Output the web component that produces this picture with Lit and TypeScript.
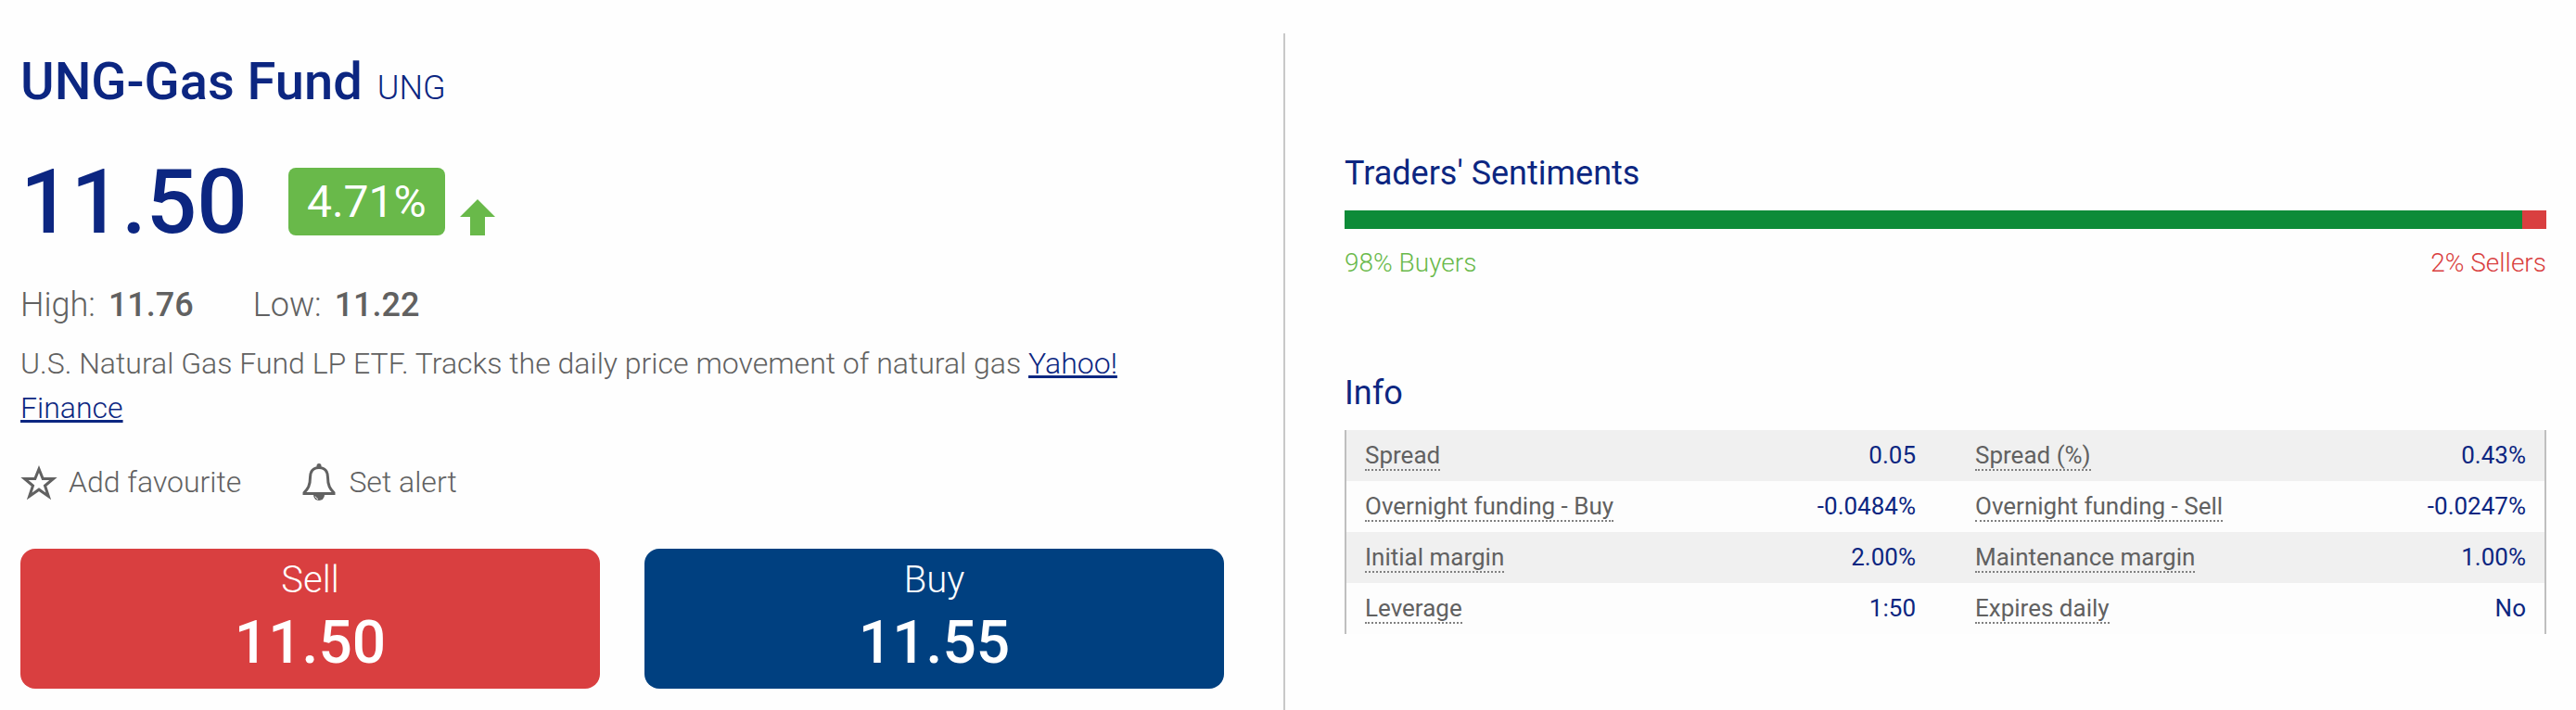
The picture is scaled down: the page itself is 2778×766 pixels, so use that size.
import { LitElement, html, css } from "lit";
import { customElement } from "lit/decorators.js";

const rows = [
  ["Spread", "0.05", "Spread (%)", "0.43%"],
  ["Overnight funding - Buy", "-0.0484%", "Overnight funding - Sell", "-0.0247%"],
  ["Initial margin", "2.00%", "Maintenance margin", "1.00%"],
  ["Leverage", "1:50", "Expires daily", "No"],
];

@customElement("instrument-summary")
class InstrumentSummary extends LitElement {
  static styles = css`
    :host { display: block; color: #616161; font-weight: 300; }
    .title { display: flex; align-items: baseline; gap: 16px; margin: 0; color: #0c2681; font-size: 56px; line-height: 64px; font-weight: 500; }
    .symbol { font-size: 36px; line-height: 44px; font-weight: 300; }
    .quote { display: flex; align-items: flex-end; margin-top: 50px; }
    .price { color: #0c2681; font-size: 96px; line-height: 96px; font-weight: 500; }
    .change { margin: 0 16px 12px 44px; padding: 0 20px; border-radius: 8px; background: #69b94a; color: #fff; font-size: 48px; line-height: 73px; font-weight: 400; }
    .arrow { display: block; margin-bottom: 12px; fill: #69b94a; }
    .range { display: flex; gap: 64px; margin: 41px 0 0; font-size: 36px; line-height: 44px; }
    .range div { display: flex; gap: 14px; }
    .range dd { margin: 0; font-weight: 500; }
    .about { margin: 17px 0 0; font-size: 32px; line-height: 48px; }
    .about a { color: #0c2681; text-underline-offset: 2px; text-decoration-thickness: 3px; }
    .actions { display: flex; gap: 64px; margin-top: 36px; }
    .action { display: flex; align-items: center; gap: 12px; padding: 0; border: 0; background: none; font: inherit; font-size: 32px; line-height: 40px; color: inherit; }
    .icon { display: block; fill: none; stroke: currentColor; stroke-width: 3; }
    .solid { fill: currentColor; stroke: none; }
    .glint { stroke: #fefefe; stroke-width: 1; }
    .deals { display: grid; grid-template-columns: 1fr 1fr; gap: 48px; margin-top: 52px; }
    .deal { display: flex; flex-direction: column; align-items: center; gap: 6px; padding: 12px 0 9px; border: 0; border-radius: 16px; color: #fff; font: inherit; font-size: 40px; line-height: 44px; }
    .deal strong { font-size: 64px; line-height: 80px; font-weight: 500; }
    .sell { background: #d93f40; }
    .buy { background: #004080; }
  `;
  render() {
    return html`
      <h1 class="title">UNG-Gas Fund <span class="symbol">UNG</span></h1>
      <div class="quote">
        <span class="price">11.50</span>
        <span class="change">4.71%</span>
        <svg class="arrow" width="38" height="39" viewBox="0 0 38 39" aria-hidden="true"><path d="M19 0 38 19H27V39H11V19H0Z"/></svg>
      </div>
      <dl class="range">
        <div><dt>High:</dt><dd>11.76</dd></div>
        <div><dt>Low:</dt><dd>11.22</dd></div>
      </dl>
      <p class="about">U.S. Natural Gas Fund LP ETF. Tracks the daily price movement of natural gas <a href="#">Yahoo! Finance</a></p>
      <div class="actions">
        <button class="action" type="button">
          <svg class="icon" width="40" height="40" viewBox="0 0 40 40" aria-hidden="true"><path d="M20 6L24.200 16.500H35.500L26.500 24L30.300 35.500L20 28.200L9.700 35.500L13.500 24L4.500 16.500H15.800Z"/></svg>
          Add favourite
        </button>
        <button class="action" type="button">
          <svg class="icon" width="40" height="40" viewBox="0 0 40 40" aria-hidden="true">
            <path d="M20 4.500C13.500 4.500 10.500 9 10.500 15C10.500 24 8 27.500 4 31.500V32.500H36V31.500C32 27.500 29.500 24 29.500 15C29.500 9 26.500 4.500 20 4.500Z"/>
            <circle class="solid" cx="20" cy="2.500" r="2.500"/>
            <path class="solid" d="M14 34H26A6 6 0 0 1 14 34Z"/>
            <path class="glint" d="M16 35.500Q17 38 19 38.500"/>
          </svg>
          Set alert
        </button>
      </div>
      <div class="deals">
        <button class="deal sell" type="button">Sell<strong>11.50</strong></button>
        <button class="deal buy" type="button">Buy<strong>11.55</strong></button>
      </div>
    `;
  }
}

@customElement("instrument-details")
class InstrumentDetails extends LitElement {
  static styles = css`
    :host { display: block; }
    h2 { margin: 0; color: #0c2681; font-size: 36px; line-height: 44px; font-weight: 400; }
    .bar { display: flex; height: 20px; margin-top: 18px; background: #d93f40; }
    .bar-buy { background: #0d8b38; }
    .shares { display: flex; justify-content: space-between; margin: 21px 0 102px; font-size: 28px; line-height: 32px; font-weight: 300; }
    .buyers { color: #69b94a; }
    .sellers { color: #d93f40; }
    .info { width: 100%; margin-top: 18px; border-collapse: separate; border-spacing: 0; border: solid #bfbfbf; border-width: 0 2px; font-size: 26px; line-height: 30px; table-layout: fixed; }
    .info th, .info td { height: 55px; padding: 0 20px 2px; font-weight: 400; box-sizing: border-box; }
    .info th { text-align: left; color: #616161; }
    .info td { text-align: right; color: #0c2681; }
    .info td:nth-child(2) { padding-right: 32px; }
    .info th:nth-child(3) { padding-left: 32px; }
    .info tr:nth-child(odd) { background: #f0f0f0; }
    .info tr:nth-child(even) { background: #fdfdfd; }
    .term { border-bottom: 2px dotted #808080; }
  `;
  render() {
    const buyers = 98;
    return html`
      <h2>Traders' Sentiments</h2>
      <div class="bar"><div class="bar-buy" style="width:${buyers}%"></div></div>
      <div class="shares"><span class="buyers">${buyers}% Buyers</span><span class="sellers">${100 - buyers}% Sellers</span></div>
      <h2 id="info">Info</h2>
      <table class="info" aria-labelledby="info"><tbody>
        ${rows.map(([a, b, c, d]) => html`<tr>
          <th scope="row"><span class="term">${a}</span></th><td>${b}</td>
          <th scope="row"><span class="term">${c}</span></th><td>${d}</td>
        </tr>`)}
      </tbody></table>
    `;
  }
}

@customElement("app-root")
class AppRoot extends LitElement {
  static styles = css`
    :host { display: block; min-height: 100vh; box-sizing: border-box; padding-top: 36px; background: #fefefe; font-family: Roboto, sans-serif; }
    .page { display: grid; grid-template-columns: 1fr 1fr; min-height: calc(100vh - 36px); box-sizing: border-box; padding-right: 6px; }
    .summary { padding: 20px 64px 22px 22px; border-right: 2px solid #c8c8c8; }
    .details { padding: 129px 26px 0 64px; }
  `;
  render() {
    return html`<main class="page">
      <instrument-summary class="summary"></instrument-summary>
      <instrument-details class="details"></instrument-details>
    </main>`;
  }
}
